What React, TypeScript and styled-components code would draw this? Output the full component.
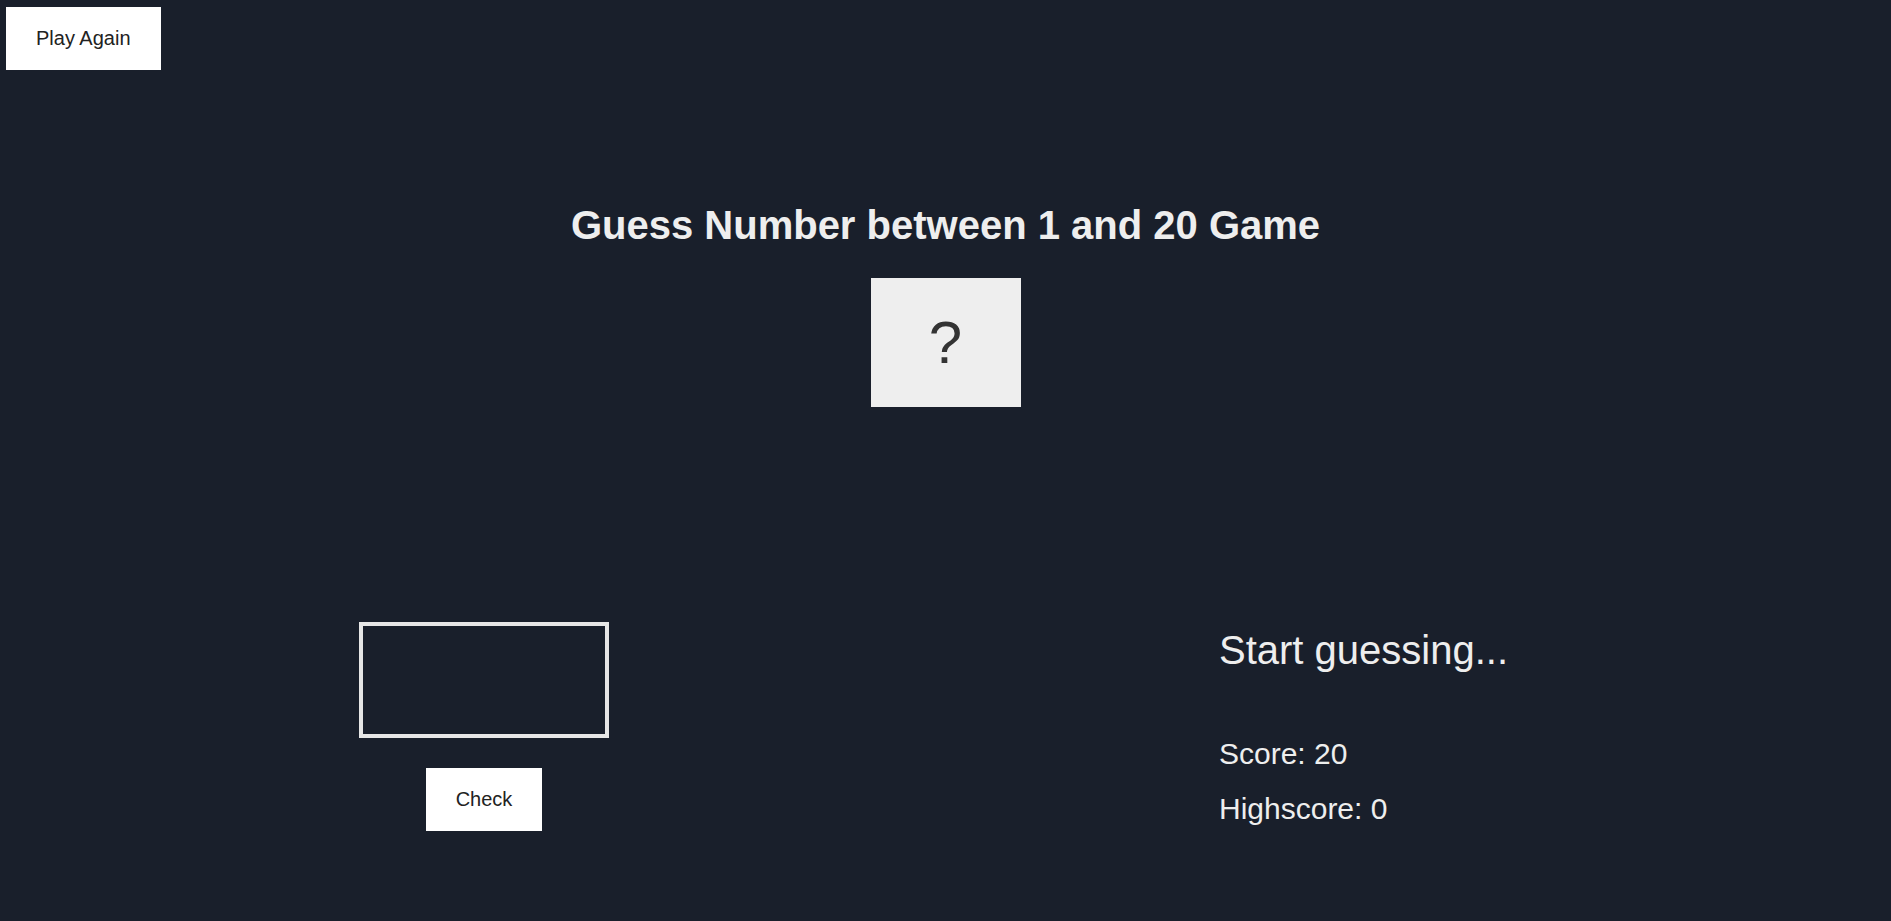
import React from "react";
import styled, { createGlobalStyle } from "styled-components";

const GlobalStyle = createGlobalStyle`
  * { box-sizing: border-box; }
  html, body { margin: 0; padding: 0; }
  body {
    background: #191f2b;
    color: #eee;
    font-family: "Liberation Sans", Arial, sans-serif;
    min-height: 100vh;
  }
`;

const Page = styled.div`
  padding: 7px 6px 0;
  min-height: 100vh;
`;

const TopBar = styled.header`
  display: flex;
  justify-content: flex-start;
`;

const Button = styled.button`
  font-family: "Liberation Sans", Arial, sans-serif;
  font-size: 20px;
  line-height: 23px;
  padding: 20px 30px;
  background: #fff;
  color: #222;
  border: none;
  cursor: pointer;
`;

const Hero = styled.section`
  display: flex;
  flex-direction: column;
  align-items: center;
  margin-top: 132px;
`;

const Title = styled.h1`
  margin: 0;
  font-size: 40px;
  line-height: 46px;
  font-weight: 700;
  color: #eee;
`;

const NumberBox = styled.div`
  margin-top: 30px;
  width: 150px;
  padding: 30px 0;
  background: #eee;
  color: #333;
  font-size: 60px;
  line-height: 69px;
  text-align: center;
`;

const Main = styled.main`
  display: grid;
  grid-template-columns: 956px 1fr;
  align-items: center;
  margin-top: 215px;
`;

const Left = styled.div`
  display: flex;
  flex-direction: column;
  align-items: center;
  gap: 30px;
`;

const GuessInput = styled.input`
  width: 250px;
  height: 116px;
  border: 4px solid #e6e6e6;
  background: transparent;
  color: #eee;
  font-family: "Liberation Sans", Arial, sans-serif;
  font-size: 50px;
  text-align: center;
  outline: none;
`;

const Right = styled.div`
  padding-left: 257px;
`;

const Message = styled.p`
  margin: 0 0 64px;
  font-size: 40px;
  line-height: 46px;
`;

const Stat = styled.p`
  margin: 0 0 20px;
  font-size: 30px;
  line-height: 34.5px;
  &:last-child { margin-bottom: 0; }
`;

export default function App() {
  return (
    <>
      <GlobalStyle />
      <Page>
        <TopBar>
          <Button>Play Again</Button>
        </TopBar>
        <Hero>
          <Title>Guess Number between 1 and 20 Game</Title>
          <NumberBox>?</NumberBox>
        </Hero>
        <Main>
          <Left>
            <GuessInput type="number" />
            <Button>Check</Button>
          </Left>
          <Right>
            <Message>Start guessing...</Message>
            <Stat>Score: 20</Stat>
            <Stat>Highscore: 0</Stat>
          </Right>
        </Main>
      </Page>
    </>
  );
}
